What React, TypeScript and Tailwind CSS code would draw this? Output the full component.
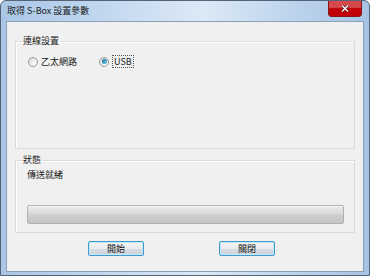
import React from 'react';

function Radio({ checked, label, focused }: { checked?: boolean; label: string; focused?: boolean }) {
  return (
    <label className="flex items-center gap-[3px]">
      <span className="flex h-[10px] w-[10px] items-center justify-center rounded-full border border-[#9a9a9a] bg-[radial-gradient(circle_at_70%_70%,#ffffff,#d4d4d4)]">
        {checked && (
          <span className="h-[5px] w-[5px] rounded-full bg-[radial-gradient(circle_at_65%_65%,#5cc8f0,#0d4f80)]" />
        )}
      </span>
      <span className={focused ? 'border border-dotted border-[#555] px-[1px] leading-[11px]' : 'leading-[11px]'}>
        {label}
      </span>
    </label>
  );
}

function Button({ children }: { children: React.ReactNode }) {
  return (
    <button className="flex h-[15px] w-[56px] items-center justify-center rounded-[2px] border border-[#3d9bd0] bg-[linear-gradient(to_bottom,#f4f4f4_0%,#e9ebee_50%,#d8dde3_51%,#cdd3da_100%)] text-[9px] leading-none text-[#111] shadow-[inset_0_0_0_1px_#c4e8f8]">
      {children}
    </button>
  );
}

function CloseButton() {
  return (
    <div className="mr-[7px] flex h-[16px] w-[34px] items-center justify-center rounded-b-[4px] border border-t-0 border-red-900 bg-red-700 shadow-[inset_0_7px_1px_rgba(255,210,200,0.35)]">
      <svg width="8" height="7" viewBox="0 0 8 7">
        <path d="M1 0.5 L7 6.5 M7 0.5 L1 6.5" stroke="#5a2219" strokeWidth="2.6" />
        <path d="M1 0.5 L7 6.5 M7 0.5 L1 6.5" stroke="#ffffff" strokeWidth="1.3" />
      </svg>
    </div>
  );
}

export default function App() {
  return (
    <div
      className="flex h-[276px] w-[370px] flex-col overflow-hidden rounded-t-[6px] border border-[#53647a] bg-[linear-gradient(to_right,#a9c6e6_0%,#c9dcf1_35%,#dce9f6_55%,#bcd3ec_80%,#a7c3e4_100%)] text-[9px] text-[#1a1a1a]"
      style={{ fontFamily: '"Noto Sans CJK TC", "Liberation Sans", sans-serif' }}
    >
      <div className="flex h-[20px] shrink-0 items-start justify-between">
        <span className="pl-[6px] pt-[4px] text-[9px] leading-[12px] text-[#1c1c1c]">取得 S-Box 設置參數</span>
        <CloseButton />
      </div>
      <div className="mx-[5px] mb-[3px] flex flex-1 flex-col border border-[#8aa0b8] bg-[#f0f0f0] px-[8px] pt-[13px]">
        <fieldset className="h-[114px] border border-[#dadada] pl-[10px] pr-[8px] shadow-[inset_1px_1px_0_#fff]">
          <legend className="ml-[-3px] pr-[2px] leading-[12px]">連線設置</legend>
          <div className="flex items-center gap-[22px] pt-[8px] pl-[2px]">
            <Radio label="乙太網路" />
            <Radio label="USB" checked focused />
          </div>
        </fieldset>
        <fieldset className="mt-[5px] h-[79px] border border-[#dadada] pl-[11px] pr-[10px] shadow-[inset_1px_1px_0_#fff]">
          <legend className="ml-[-4px] pr-[2px] leading-[12px]">狀態</legend>
          <div className="pt-[3px] leading-[12px]">傳送就緒</div>
          <div className="mt-[24px] h-[19px] rounded-[2px] border border-[#b2b2b2] bg-[linear-gradient(to_bottom,#ececec_0%,#dadada_45%,#cdcdcd_55%,#c6c6c6_100%)] shadow-[inset_0_1px_0_#f6f6f6]" />
        </fieldset>
        <div className="flex justify-center gap-[75px] pt-[8px] pr-[7px]">
          <Button>開始</Button>
          <Button>關閉</Button>
        </div>
      </div>
    </div>
  );
}
